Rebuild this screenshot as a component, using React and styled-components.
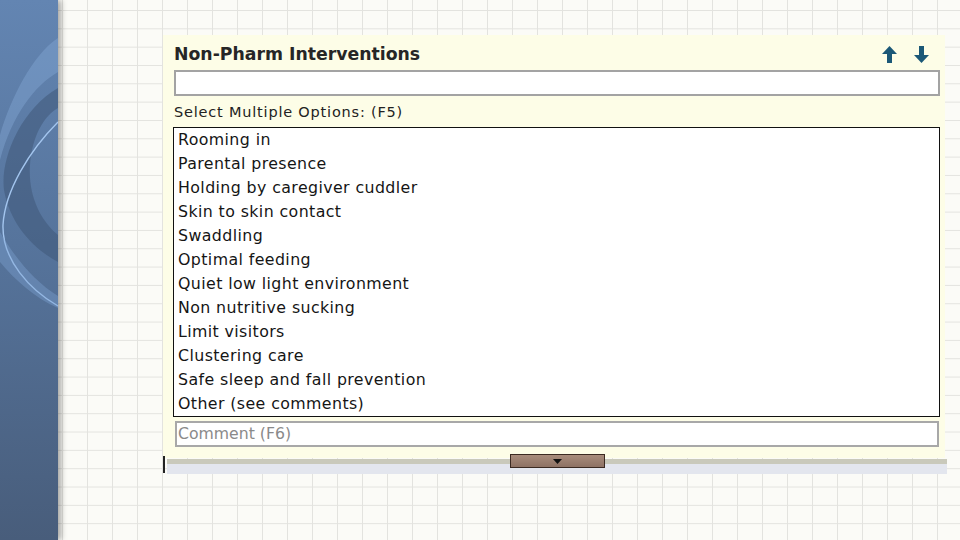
import React from 'react';
import styled, { createGlobalStyle } from 'styled-components';

const GlobalStyle = createGlobalStyle`
  html, body {
    margin: 0;
    padding: 0;
    width: 960px;
    height: 540px;
    overflow: hidden;
  }
  body {
    font-family: 'DejaVu Sans', 'Open Sans', sans-serif;
  }
`;

const Page = styled.div`
  display: flex;
  width: 960px;
  height: 540px;
`;

const Sidebar = styled.div`
  position: relative;
  z-index: 1;
  flex: 0 0 58px;
  height: 540px;
  background: linear-gradient(to bottom, #6385b2 0%, #56749c 45%, #485d7b 100%);
  box-shadow: 3px 0 6px rgba(0, 0, 0, 0.35);
  overflow: hidden;

  svg {
    display: block;
  }
`;

const Main = styled.div`
  flex: 1;
  height: 540px;
  background-color: #fbfbf7;
  background-image: linear-gradient(to right, #e3e3df 1px, transparent 1px),
    linear-gradient(to bottom, #e3e3df 1px, transparent 1px);
  background-size: 25px 18.33px;
  background-position: 4px 10px;
  padding: 35px 0 0 105px;
  box-sizing: border-box;
`;

const Panel = styled.div`
  width: 782px;
  background: #fdfde7;
  padding: 6px 5px 11px 10px;
  box-sizing: border-box;
`;

const TitleRow = styled.div`
  display: flex;
  align-items: center;
  justify-content: space-between;
  height: 26px;
  padding-right: 11px;
`;

const Title = styled.h2`
  margin: 0 0 0 1px;
  font-size: 17.3px;
  font-weight: 700;
  color: #262626;
`;

const Arrows = styled.div`
  display: flex;
  gap: 17px;
`;

const TextBox = styled.div`
  height: 26px;
  margin: 3px 0 0 1px;
  background: #fff;
  border: 2px solid #a3a3a3;
  box-sizing: border-box;
`;

const Label = styled.div`
  margin: 6px 0 0 1px;
  font-size: 14.5px;
  letter-spacing: 0.8px;
  color: #222;
  height: 20px;
  line-height: 20px;
`;

const ListBox = styled.div`
  margin-top: 5px;
  background: #fff;
  border: 1px solid #111;
  padding: 0 0 0 4px;
`;

const Option = styled.div`
  height: 24px;
  line-height: 24px;
  font-size: 15.8px;
  letter-spacing: 0.4px;
  color: #151515;
`;

const CommentBox = styled.div`
  height: 26px;
  margin: 4px 1px 0 2px;
  background: #fff;
  border: 2px solid #a8a8a8;
  box-sizing: border-box;
  padding-left: 1px;
  font-size: 15.7px;
  line-height: 22px;
  color: #8a8a8a;
`;

const Footer = styled.div`
  position: relative;
  display: flex;
  width: 784px;
  margin-top: -4px;
`;

const Tick = styled.div`
  width: 2px;
  height: 17px;
  margin-top: 2px;
  background: #222;
`;

const Bars = styled.div`
  flex: 1;
  margin: 5px 0 0 2px;
`;

const GrayBar = styled.div`
  height: 5px;
  background: #c9c9bb;
`;

const BlueStrip = styled.div`
  height: 10px;
  background: #e3e6ee;
`;

const ToggleButton = styled.button`
  position: absolute;
  left: 347px;
  top: 0;
  width: 95px;
  height: 14px;
  padding: 0;
  border: 1px solid #3b2a22;
  background: linear-gradient(to bottom, #a88c7c, #8e7264);
  display: flex;
  align-items: center;
  justify-content: center;
  cursor: pointer;
`;

const options = [
  'Rooming in',
  'Parental presence',
  'Holding by caregiver cuddler',
  'Skin to skin contact',
  'Swaddling',
  'Optimal feeding',
  'Quiet low light environment',
  'Non nutritive sucking',
  'Limit visitors',
  'Clustering care',
  'Safe sleep and fall prevention',
  'Other (see comments)',
];

const ArrowIcon = ({ down }) => (
  <svg width="15" height="17" viewBox="0 0 15 17">
    <path
      d="M7.5 0 L15 8 L10 8 L10 17 L5 17 L5 8 L0 8 Z"
      fill="#1b5877"
      transform={down ? 'rotate(180 7.5 8.5)' : undefined}
    />
  </svg>
);

const Swoosh = () => (
  <svg width="58" height="540" viewBox="0 0 58 540">
    <path d="M58 38 C32 55 10 100 0 135 L0 160 C12 115 35 85 58 72 Z" fill="#8db2df" opacity="0.35" />
    <path d="M58 88 C20 110 0 160 4 190 C10 225 35 250 58 262 L58 235 C40 220 28 195 30 165 C32 135 45 115 58 108 Z" fill="#3f5878" opacity="0.55" />
    <path d="M58 122 C30 150 5 190 3 225 C2 260 30 290 58 306" fill="none" stroke="#a3c5ee" strokeWidth="1.4" />
    <path d="M0 232 C15 258 35 282 58 296 L58 308 C35 298 15 280 0 262 Z" fill="#7ea3d2" opacity="0.4" />
  </svg>
);

const App = () => (
  <Page>
    <GlobalStyle />
    <Sidebar>
      <Swoosh />
    </Sidebar>
    <Main>
      <Panel>
        <TitleRow>
          <Title>Non-Pharm Interventions</Title>
          <Arrows>
            <ArrowIcon />
            <ArrowIcon down />
          </Arrows>
        </TitleRow>
        <TextBox />
        <Label>Select Multiple Options: (F5)</Label>
        <ListBox>
          {options.map((o) => (
            <Option key={o}>{o}</Option>
          ))}
        </ListBox>
        <CommentBox>Comment (F6)</CommentBox>
      </Panel>
      <Footer>
        <Tick />
        <Bars>
          <GrayBar />
          <BlueStrip />
        </Bars>
        <ToggleButton aria-label="expand">
          <svg width="9" height="5" viewBox="0 0 9 5">
            <path d="M0 0 L9 0 L4.5 5 Z" fill="#111" />
          </svg>
        </ToggleButton>
      </Footer>
    </Main>
  </Page>
);

export default App;
